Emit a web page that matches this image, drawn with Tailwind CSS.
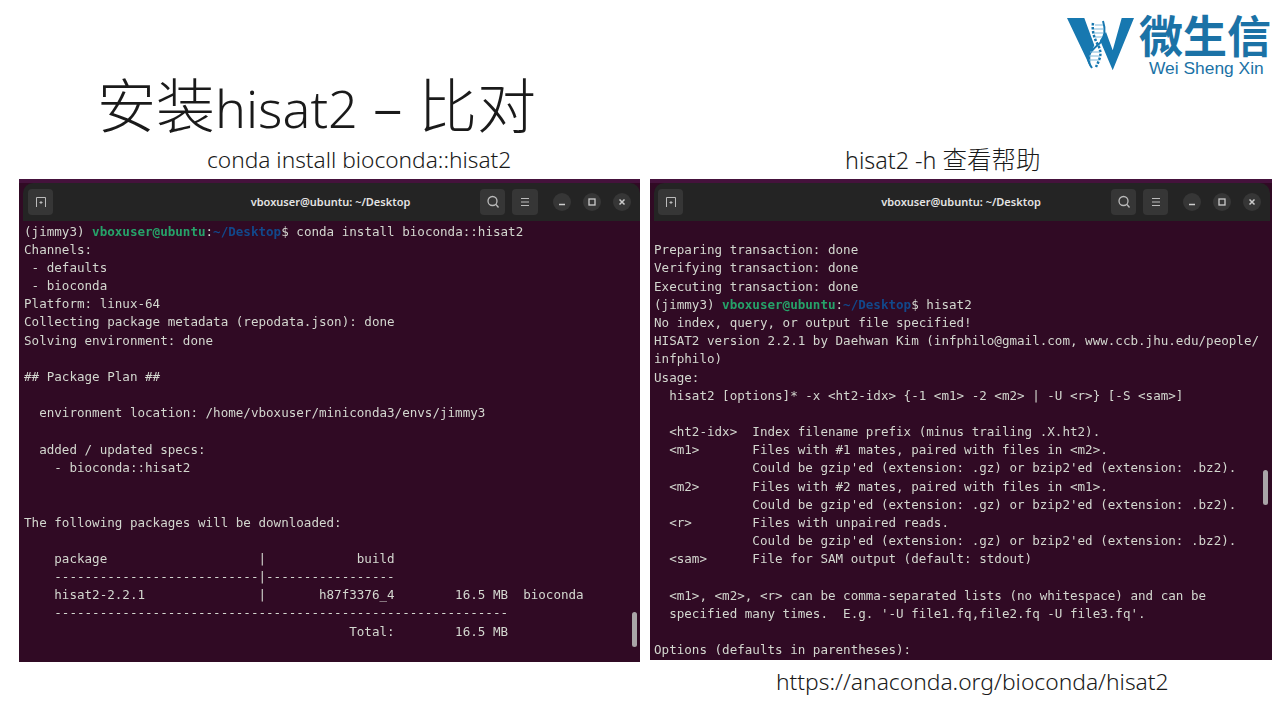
<!DOCTYPE html>
<html lang="zh">
<head>
  <meta charset="UTF-8" />
  <title>安装hisat2 - 比对</title>
  <script src="https://cdn.jsdelivr.net/npm/@tailwindcss/browser@4"></script>
</head>
<body class="w-[1280px] h-[720px] overflow-hidden bg-white font-['Noto_Sans','Noto_Sans_CJK_SC',sans-serif] text-[#1a1a1a]">

  <!-- Title + logo -->
  <header class="h-[146px] flex justify-between">
    <h1 class="pl-[97px] pt-[63px] text-[59px] leading-[84px] font-light whitespace-nowrap">安装<span class="text-[52px]">hisat2</span> – 比对</h1>
    <div class="w-[213px] pt-[8px] flex flex-col shrink-0">
      <div class="flex items-start gap-[4px]">
        <svg width="69" height="54" viewBox="0 0 69 54" class="mt-[10px] -ml-[1px] shrink-0">
          <path d="M1 0H18.300L28.300 27.300L24.300 37.300V49Z" fill="#1778b0"/>
          <path d="M68 0H55.700L46.700 32.300L40 14L34 22.300L46.700 52.300Z" fill="#1778b0"/>
          <path d="M37 3C40 12 38 20 34 25C28 30 22 36 22 40C22 44 24 47 26 50" fill="none" stroke="#1778b0" stroke-width="2"/>
          <path d="M27 5C26 13 28 20 32 27C35 32 35 38 33 42C32 45 31 47 30 49" fill="none" stroke="#1778b0" stroke-width="2.500" stroke-dasharray="2.500 1.500"/>
          <path d="M29 7H37M28 11H38M28 15H37M29 19H36M24 34H34M23 38H34M23 42H33" fill="none" stroke="#7fb7d8" stroke-width="1"/>
        </svg>
        <span class="text-[44px] leading-[52px] font-bold text-[#1b72a6] font-['Noto_Sans_CJK_SC',sans-serif] whitespace-nowrap">微生信</span>
      </div>
      <span class="pl-[82px] -mt-[14px] text-[17.400px] leading-[20px] text-[#1b72a6] font-['Liberation_Sans',sans-serif] whitespace-nowrap">Wei Sheng Xin</span>
    </div>
  </header>

  <main class="pl-[19px] grid grid-cols-[621px_622px] gap-x-[10px]">

    <!-- left: install -->
    <section>
      <p class="h-[33px] pl-[188px] text-[22.700px] leading-[28px] font-light whitespace-nowrap">conda install bioconda::hisat2</p>
      <div class="relative h-[483px] bg-[#300a24] border-t-4 border-[#45123c] pl-[4px] overflow-hidden">
        <div class="h-[38px] rounded-t-[10px] bg-[#242424] flex items-center pl-[5px] pr-[9px]">
          <button class="w-[25px] h-[26px] rounded-[4px] bg-[#363636] flex items-center justify-center">
            <svg width="12" height="12" viewBox="0 0 12 12" fill="none" stroke="#bbb" stroke-width="1"><path d="M1.500 11V1.500H10.500V11M4.500 6.500H7.500M6 5V8"/></svg>
          </button>
          <span class="flex-1 text-center text-[11px] font-semibold text-[#e4e4e4] pl-[128px]">vboxuser@ubuntu: ~/Desktop</span>
          <button class="w-[25px] h-[26px] rounded-[4px] bg-[#363636] flex items-center justify-center">
            <svg width="14" height="14" viewBox="0 0 14 14" fill="none" stroke="#bbb" stroke-width="1.300"><circle cx="6.500" cy="6" r="4.500"/><path d="M10 9.500L12.500 12.500"/></svg>
          </button>
          <button class="ml-[7px] w-[26px] h-[26px] rounded-[4px] bg-[#363636] flex items-center justify-center">
            <svg width="12" height="10" viewBox="0 0 12 10" stroke="#bbb" stroke-width="1.200"><path d="M2 1.500H10M2 5H10M2 8.500H10"/></svg>
          </button>
          <span class="ml-[15px] w-[18px] h-[18px] rounded-full bg-[#363636] flex items-center justify-center">
            <svg width="10" height="10" viewBox="0 0 10 10" stroke="#ccc" stroke-width="1.500"><path d="M2 7.500H8"/></svg>
          </span>
          <span class="ml-[12px] w-[18px] h-[18px] rounded-full bg-[#363636] flex items-center justify-center">
            <svg width="10" height="10" viewBox="0 0 10 10" fill="none" stroke="#ccc" stroke-width="1.300"><rect x="2" y="2" width="6" height="6"/></svg>
          </span>
          <span class="ml-[12px] w-[18px] h-[18px] rounded-full bg-[#363636] flex items-center justify-center">
            <svg width="10" height="10" viewBox="0 0 10 10" stroke="#ccc" stroke-width="1.500"><path d="M2.500 2.500L7.500 7.500M7.500 2.500L2.500 7.500"/></svg>
          </span>
        </div>
        <pre class="pl-[1px] pt-[1.500px] text-[12.570px] leading-[18.180px] text-[#d3d7cf] font-['DejaVu_Sans_Mono',monospace] blur-[0.3px]">(jimmy3) <span class="font-bold text-[#26a269]">vboxuser@ubuntu</span>:<span class="font-bold text-[#12488b]">~/Desktop</span>$ conda install bioconda::hisat2
Channels:
 - defaults
 - bioconda
Platform: linux-64
Collecting package metadata (repodata.json): done
Solving environment: done

## Package Plan ##

  environment location: /home/vboxuser/miniconda3/envs/jimmy3

  added / updated specs:
    - bioconda::hisat2


The following packages will be downloaded:

    package                    |            build
    ---------------------------|-----------------
    hisat2-2.2.1               |       h87f3376_4        16.5 MB  bioconda
    ------------------------------------------------------------
                                           Total:        16.5 MB</pre>
        <span class="absolute left-[613px] top-[429px] w-[5px] h-[35px] rounded-full bg-[#a9a4a7]"></span>
      </div>
    </section>

    <!-- right: help -->
    <section>
      <p class="h-[33px] pl-[195px] text-[23.300px] leading-[28px] font-light whitespace-nowrap">hisat2 -h <span class="text-[24.500px]">查看帮助</span></p>
      <div class="relative h-[481px] bg-[#300a24] border-t-4 border-[#45123c] pl-[4px] overflow-hidden">
        <div class="h-[38px] rounded-t-[10px] mr-[2px] bg-[#242424] flex items-center pl-[4px] pr-[9px]">
          <button class="w-[25px] h-[26px] rounded-[4px] bg-[#363636] flex items-center justify-center">
            <svg width="12" height="12" viewBox="0 0 12 12" fill="none" stroke="#bbb" stroke-width="1"><path d="M1.500 11V1.500H10.500V11M4.500 6.500H7.500M6 5V8"/></svg>
          </button>
          <span class="flex-1 text-center text-[11px] font-semibold text-[#e4e4e4] pl-[128px]">vboxuser@ubuntu: ~/Desktop</span>
          <button class="w-[25px] h-[26px] rounded-[4px] bg-[#363636] flex items-center justify-center">
            <svg width="14" height="14" viewBox="0 0 14 14" fill="none" stroke="#bbb" stroke-width="1.300"><circle cx="6.500" cy="6" r="4.500"/><path d="M10 9.500L12.500 12.500"/></svg>
          </button>
          <button class="ml-[7px] w-[25px] h-[26px] rounded-[4px] bg-[#363636] flex items-center justify-center">
            <svg width="12" height="10" viewBox="0 0 12 10" stroke="#bbb" stroke-width="1.200"><path d="M2 1.500H10M2 5H10M2 8.500H10"/></svg>
          </button>
          <span class="ml-[15px] w-[18px] h-[18px] rounded-full bg-[#363636] flex items-center justify-center">
            <svg width="10" height="10" viewBox="0 0 10 10" stroke="#ccc" stroke-width="1.500"><path d="M2 7.500H8"/></svg>
          </span>
          <span class="ml-[12px] w-[18px] h-[18px] rounded-full bg-[#363636] flex items-center justify-center">
            <svg width="10" height="10" viewBox="0 0 10 10" fill="none" stroke="#ccc" stroke-width="1.300"><rect x="2" y="2" width="6" height="6"/></svg>
          </span>
          <span class="ml-[12px] w-[18px] h-[18px] rounded-full bg-[#363636] flex items-center justify-center">
            <svg width="10" height="10" viewBox="0 0 10 10" stroke="#ccc" stroke-width="1.500"><path d="M2.500 2.500L7.500 7.500M7.500 2.500L2.500 7.500"/></svg>
          </span>
        </div>
        <pre class="pt-[2px] text-[12.570px] leading-[18.180px] text-[#d3d7cf] font-['DejaVu_Sans_Mono',monospace] blur-[0.3px]">

Preparing transaction: done
Verifying transaction: done
Executing transaction: done
(jimmy3) <span class="font-bold text-[#26a269]">vboxuser@ubuntu</span>:<span class="font-bold text-[#12488b]">~/Desktop</span>$ hisat2
No index, query, or output file specified!
HISAT2 version 2.2.1 by Daehwan Kim (infphilo@gmail.com, www.ccb.jhu.edu/people/
infphilo)
Usage:
  hisat2 [options]* -x &lt;ht2-idx&gt; {-1 &lt;m1&gt; -2 &lt;m2&gt; | -U &lt;r&gt;} [-S &lt;sam&gt;]

  &lt;ht2-idx&gt;  Index filename prefix (minus trailing .X.ht2).
  &lt;m1&gt;       Files with #1 mates, paired with files in &lt;m2&gt;.
             Could be gzip'ed (extension: .gz) or bzip2'ed (extension: .bz2).
  &lt;m2&gt;       Files with #2 mates, paired with files in &lt;m1&gt;.
             Could be gzip'ed (extension: .gz) or bzip2'ed (extension: .bz2).
  &lt;r&gt;        Files with unpaired reads.
             Could be gzip'ed (extension: .gz) or bzip2'ed (extension: .bz2).
  &lt;sam&gt;      File for SAM output (default: stdout)

  &lt;m1&gt;, &lt;m2&gt;, &lt;r&gt; can be comma-separated lists (no whitespace) and can be
  specified many times.  E.g. '-U file1.fq,file2.fq -U file3.fq'.

Options (defaults in parentheses):</pre>
        <span class="absolute left-[613px] top-[287px] w-[5px] h-[35px] rounded-full bg-[#a9a4a7]"></span>
      </div>
      <p class="pl-[126px] pt-[7px] text-[22.800px] leading-[30px] font-light whitespace-nowrap">https://anaconda.org/bioconda/hisat2</p>
    </section>
  </main>
</body>
</html>
